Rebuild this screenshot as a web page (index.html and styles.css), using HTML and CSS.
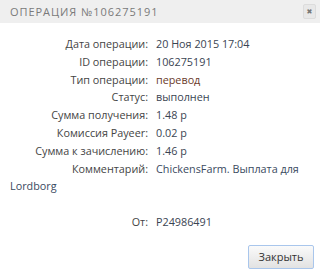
FILE: index.html
```html
<!DOCTYPE html>
<html>
<head>
<meta charset="utf-8">
<link rel="stylesheet" href="styles.css">
</head>
<body>
<div class="dialog">
  <div class="head">
    <span class="title">Операция №106275191</span>
    <span class="close">&#x2716;</span>
  </div>
  <div class="body">
    <div class="row"><span class="lbl">Дата операции:</span><span class="val">20 Ноя 2015 17:04</span></div>
    <div class="row"><span class="lbl">ID операции:</span><span class="val">106275191</span></div>
    <div class="row"><span class="lbl">Тип операции:</span><span class="val type">перевод</span></div>
    <div class="row"><span class="lbl">Статус:</span><span class="val">выполнен</span></div>
    <div class="row"><span class="lbl">Сумма получения:</span><span class="val">1.48 р</span></div>
    <div class="row"><span class="lbl">Комиссия Payeer:</span><span class="val">0.02 р</span></div>
    <div class="row"><span class="lbl">Сумма к зачислению:</span><span class="val">1.46 р</span></div>
    <div class="row comment"><span class="lbl">Комментарий:</span><span class="val link">ChickensFarm. Выплата для</span> <span class="val link">Lordborg</span></div>
    <div class="row from"><span class="lbl">От:</span><span class="val">P24986491</span></div>
  </div>
  <div class="foot">
    <button class="btn">Закрыть</button>
  </div>
</div>
</body>
</html>
```
FILE: styles.css
```css
html, body { margin: 0; padding: 0; background: #fff; }
.dialog { width: 320px; height: 274px; font-family: "Open Sans", "DejaVu Sans", sans-serif; font-size: 10.8px; color: #444; }
.head { height: 23px; background: #efefef; display: flex; align-items: center; justify-content: space-between; padding: 0 4px 0 10px; }
.title { text-transform: uppercase; letter-spacing: 0.95px; color: #7a7a7a; font-size: 11px; }
.close { width: 11px; height: 13px; border: 1px solid #dcdcdc; border-radius: 2px; background: #e8e8e8; color: #777; font-size: 7px; display: flex; align-items: center; justify-content: center; }
.body { padding: 12px 10px 0 10px; }
.row { line-height: 17.8px; color: #444; }
.lbl { display: inline-block; width: 138px; text-align: right; margin-right: 8px; vertical-align: top; }
.val { color: #3a4452; }
.type { color: #6a3a2a; }
.link { color: #3a4a60; }
.from { margin-top: 17.8px; }
.foot { display: flex; justify-content: flex-end; padding: 14px 6px 0 0; }
.btn { font-family: "Open Sans", "DejaVu Sans", sans-serif; font-size: 11px; color: #333; width: 66px; height: 24px; border: 1px solid #a9c6ec; border-radius: 2px; background: linear-gradient(#fafafa, #e2e2e2); padding: 0; }
```
